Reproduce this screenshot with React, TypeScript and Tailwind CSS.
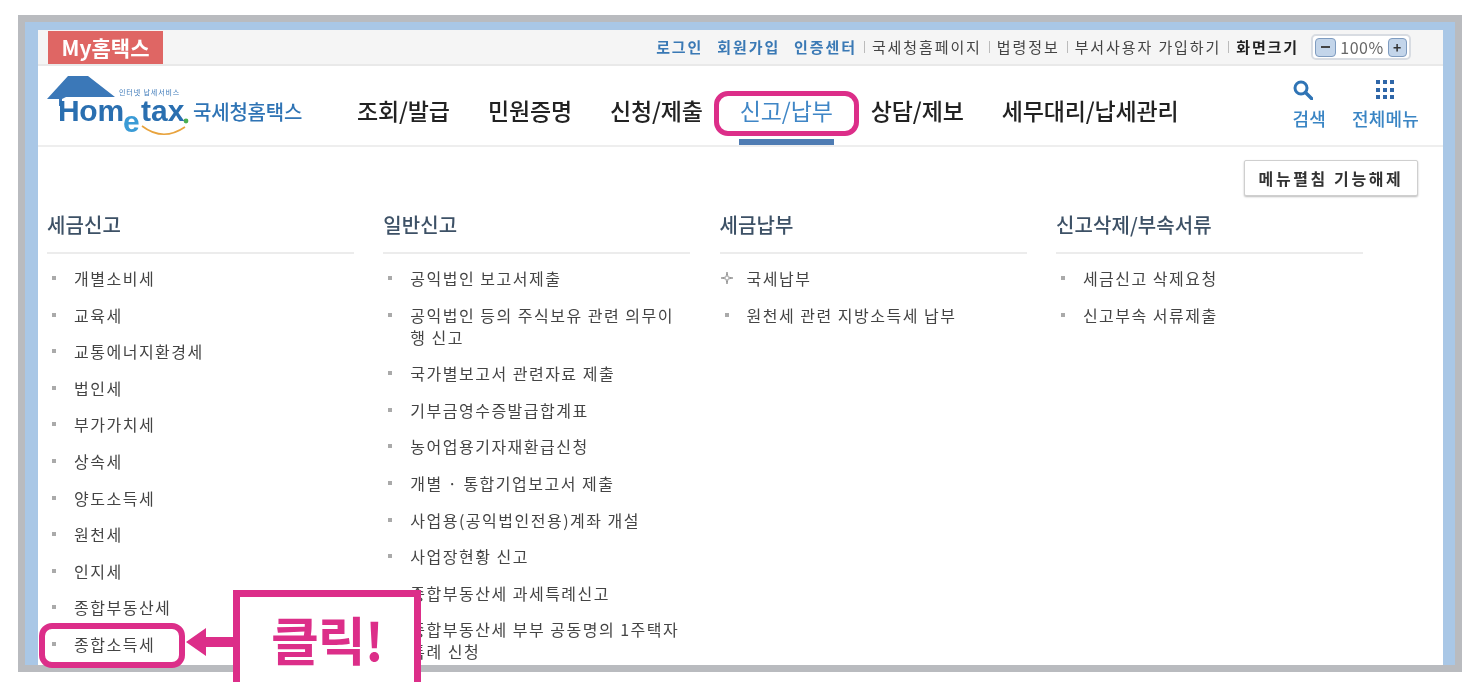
const font = { fontFamily: '"Noto Sans CJK KR", "Liberation Sans", sans-serif' };

const columns = [
    {
        title: "세금신고",
        items: [
            "개별소비세",
            "교육세",
            "교통에너지환경세",
            "법인세",
            "부가가치세",
            "상속세",
            "양도소득세",
            "원천세",
            "인지세",
            "종합부동산세",
            "종합소득세",
        ],
    },
    {
        title: "일반신고",
        items: [
            "공익법인 보고서제출",
            "공익법인 등의 주식보유 관련 의무이행 신고",
            "국가별보고서 관련자료 제출",
            "기부금영수증발급합계표",
            "농어업용기자재환급신청",
            "개별 · 통합기업보고서 제출",
            "사업용(공익법인전용)계좌 개설",
            "사업장현황 신고",
            "종합부동산세 과세특례신고",
            "종합부동산세 부부 공동명의 1주택자 특례 신청",
        ],
    },
    {
        title: "세금납부",
        items: ["국세납부", "원천세 관련 지방소득세 납부"],
    },
    {
        title: "신고삭제/부속서류",
        items: ["세금신고 삭제요청", "신고부속 서류제출"],
    },
];

function Logo() {
    return (
        <div className="relative w-[262px] h-[70px] shrink-0">
            <svg width="262" height="70" viewBox="0 0 262 70" className="absolute left-0 top-0">
                {/* roof */}
                <path d="M2 33 L23 10 L43 10 L70 31 L21 31 L17 33 L17 40 L14 40 L14 33 Z" fill="#3b78b8" />
                {/* smile */}
                <path d="M97 60 Q118 76 140 61" fill="none" stroke="#e8a33d" strokeWidth="1.6" />
                <circle cx="141" cy="55" r="2.4" fill="#4caf50" />
            </svg>
            <span className="absolute left-[13px] top-[31px] text-[30px] leading-[28px] font-bold text-[#2a6fb0] tracking-[-0.3px] [font-family:'Liberation_Sans',sans-serif]">
                Hom
            </span>
            <span className="absolute left-[78px] top-[42px] text-[30px] leading-[28px] font-bold text-[#3a9bd6] [font-family:'Liberation_Sans',sans-serif]">
                e
            </span>
            <span className="absolute left-[96px] top-[31px] text-[30px] leading-[28px] font-bold text-[#2a6fb0] [font-family:'Liberation_Sans',sans-serif]">
                tax
            </span>
            <span className="absolute left-[74px] top-[22px] text-[7px] leading-[8px] tracking-[0.9px] text-[#3b78b8]">
                인터넷 납세서비스
            </span>
            <span className="absolute left-[148px] top-[32px] text-[20px] leading-[28px] font-medium text-[#2f74b5] tracking-[-0.2px]">
                국세청홈택스
            </span>
        </div>
    );
}

function TopBar() {
    return (
        <div className="h-[36px] bg-[#f5f5f5] border-b-2 border-[#e9e9e9] flex items-stretch pl-[10px] pr-[32px]">
            <div className="w-[115px] mt-px bg-[#df6664] text-white text-[21px] leading-[33px] font-bold text-center">
                My홈택스
            </div>
            <div className="ml-auto flex items-center text-[15px] leading-[20px] tracking-[1.9px] text-[#444]">
                <span className="font-bold text-[#3a79b5]">로그인</span>
                <span className="font-bold text-[#3a79b5] ml-[14px]">회원가입</span>
                <span className="font-bold text-[#3a79b5] ml-[14px]">인증센터</span>
                <span className="mx-[7px] h-[12px] w-px bg-[#bbb]" />
                <span>국세청홈페이지</span>
                <span className="mx-[7px] h-[12px] w-px bg-[#bbb]" />
                <span>법령정보</span>
                <span className="mx-[7px] h-[12px] w-px bg-[#bbb]" />
                <span>부서사용자 가입하기</span>
                <span className="mx-[7px] h-[12px] w-px bg-[#bbb]" />
                <span className="font-bold text-[#222]">화면크기</span>
                <div className="ml-[12px] w-[100px] h-[26px] rounded-[5px] bg-white border-2 border-[#d8dce2] flex items-center justify-between px-[2px] tracking-[0.5px]">
                    <span className="w-[21px] h-[19px] rounded-[4px] bg-[#c3d5ea] border border-[#7f9cc0] flex items-center justify-center">
                        <span className="w-[9px] h-[2px] bg-[#444]" />
                    </span>
                    <span className="text-[16px] text-[#666] leading-[20px]">100%</span>
                    <span className="w-[19px] h-[19px] rounded-[4px] bg-[#c3d5ea] border border-[#7f9cc0] text-[#333] text-[14px] leading-[16px] font-bold text-center">
                        +
                    </span>
                </div>
            </div>
        </div>
    );
}

function NavBar() {
    return (
        <div className="h-[81px] border-b-2 border-[#eeeeee] flex items-start pl-[7px] bg-white">
            <Logo />
            <nav className="flex ml-[50px] text-[23px] leading-[30px] font-medium text-[#222] tracking-[-0.15px] pt-[29px] h-full">
                <span>조회/발급</span>
                <span className="ml-[38px]">민원증명</span>
                <span className="ml-[38px]">신청/제출</span>
                <div className="ml-[36px] flex flex-col items-center w-[95px] h-full text-[#3f86c6] font-normal">
                    <span>신고/납부</span>
                    <span className="mt-[14px] w-[95px] h-[6px] bg-[#4f7cb3]" />
                </div>
                <span className="ml-[37px]">상담/제보</span>
                <span className="ml-[38px]">세무대리/납세관리</span>
            </nav>
            <div className="ml-auto pr-[24px] pt-[14px] flex text-[18px] leading-[24px] text-[#3a85c4] font-medium tracking-[0.2px]">
                <div className="flex flex-col items-center">
                    <svg width="20" height="20" viewBox="0 0 20 20" className="mr-[12px] mb-[6px]">
                        <circle cx="8" cy="8" r="6" fill="none" stroke="#2f74b5" strokeWidth="3" />
                        <path d="M12.5 12.5 L19 19" stroke="#2f74b5" strokeWidth="3.4" strokeLinecap="round" />
                    </svg>
                    <span>검색</span>
                </div>
                <div className="flex flex-col items-center ml-[26px]">
                    <div className="grid grid-cols-3 gap-[3px] w-[18px] h-[20px] mb-[6px]">
                        {Array.from({ length: 9 }).map((_, i) => (
                            <span key={i} className="w-[4px] h-[4px] bg-[#2f66a8]" />
                        ))}
                    </div>
                    <span>전체메뉴</span>
                </div>
            </div>
        </div>
    );
}

function MenuColumn({ title, items }: { title: string; items: string[] }) {
    return (
        <div className="w-[307px] mr-[29.3px] shrink-0">
            <h3 className="h-[58px] pt-[14px] text-[20px] leading-[30px] font-medium text-[#3d5166] tracking-[0.1px] border-b-2 border-[#ececec]">
                {title}
            </h3>
            <ul className="mt-[13px] flex flex-col gap-[14.6px]">
                {items.map((item) => (
                    <li key={item} className="flex text-[16px] leading-[22px] text-[#444] tracking-[1.5px]">
                        {item === "국세납부" ? (
                            <span className="w-[27px] pt-[4px] shrink-0">
                                <svg width="14" height="14" viewBox="0 0 14 14">
                                    <path
                                        d="M7 1 L8 6 L13 7 L8 8 L7 13 L6 8 L1 7 L6 6 Z"
                                        fill="#fff"
                                        stroke="#999"
                                        strokeWidth="1"
                                    />
                                </svg>
                            </span>
                        ) : (
                            <span className="w-[27px] pl-[5px] pt-[9px] shrink-0">
                                <span className="block w-[4px] h-[4px] bg-[#aaa]" />
                            </span>
                        )}
                        <span className="max-w-[272px]">{item}</span>
                    </li>
                ))}
            </ul>
        </div>
    );
}

export default function App() {
    return (
        <div className="relative w-[1470px] h-[682px] overflow-hidden bg-white pl-[18px] pt-[15px]" style={font}>
            {/* frame */}
            <div className="w-[1444px] h-[657px] border-[7px] border-[#b9bbbf] bg-[#a9c7e6] pl-[13px] pr-[12px] pt-[8px]">
                <div className="h-full bg-white overflow-hidden blur-[0.6px]">
                    <TopBar />
                    <NavBar />
                    <div className="relative h-[519px] pl-[9px]">
                        <div className="absolute right-[25px] top-[13px] w-[174px] h-[36px] border border-[#cfcfcf] rounded-[2px] shadow-[0_1px_2px_#bbb] bg-white text-center text-[16px] leading-[34px] font-bold text-[#333] tracking-[2.6px]">
                            메뉴펼침 기능해제
                        </div>
                        <div className="flex pt-[49px]">
                            {columns.map((col) => (
                                <MenuColumn key={col.title} title={col.title} items={col.items} />
                            ))}
                        </div>
                    </div>
                </div>
            </div>

            {/* annotations */}
            <div className="absolute left-[714px] top-[91px] w-[145px] h-[45px] border-[5px] border-[#dc2e89] rounded-[14px]" />
            <div className="absolute left-[39px] top-[623px] w-[146px] h-[45px] border-[6px] border-[#dc2e89] rounded-[13px]" />
            <svg className="absolute left-[185px] top-[628px]" width="50" height="28" viewBox="0 0 50 28">
                <path d="M1 14 L21 0 L21 9 L50 9 L50 19 L21 19 L21 28 Z" fill="#dc2e89" />
            </svg>
            <div className="absolute left-[233px] top-[590px] w-[188px] h-[110px] border-[7px] border-[#dc2e89] bg-white text-[#dc2e89] text-[52px] leading-[84px] font-bold text-center tracking-[-1px]">
                클릭!
            </div>
        </div>
    );
}
